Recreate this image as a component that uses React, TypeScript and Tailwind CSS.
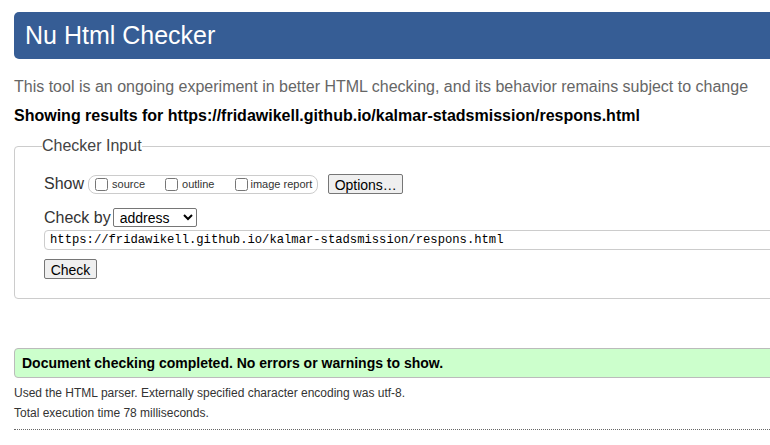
import React from 'react';

const url = 'https://fridawikell.github.io/kalmar-stadsmission/respons.html';

export default function App() {
  return (
    <div className="w-full min-h-[445px] overflow-hidden bg-white font-['Liberation_Sans',Arial,sans-serif] text-[#333]">
      <div className="w-[820px] pl-[14px] pt-[12px]">
        {/* header */}
        <h1 className="flex h-[47px] items-center rounded-l-[5px] bg-[#365d95] pl-[11px] text-[25px] text-white">
          Nu Html Checker
        </h1>

        <p className="mt-[19px] text-[16px] leading-[18px] text-[#666]">
          This tool is an ongoing experiment in better HTML checking, and its behavior remains subject to change
        </p>
        <p className="mt-[11px] text-[16px] font-bold leading-[18px] text-black">
          Showing results for {url}
        </p>

        {/* checker input */}
        <fieldset className="mt-[12px] rounded-l-[4px] border border-[#ccc] px-[27px] pb-[16px]">
          <legend className="text-[16px] leading-[18px] text-[#444]">Checker Input</legend>
          <div className="pl-[2px]">
            <div className="mt-[19px] flex h-[20px] items-center">
              <span className="text-[16px] text-[#333]">Show</span>
              <div className="ml-[4px] flex h-[19px] items-center rounded-[8px] border border-[#ccc] pl-[6px] pr-[5px] text-[11px]">
                <label className="flex items-center">
                  <input type="checkbox" className="m-0 h-[13px] w-[13px]" />
                  <span className="ml-[4px]">source</span>
                </label>
                <label className="ml-[20px] flex items-center">
                  <input type="checkbox" className="m-0 h-[13px] w-[13px]" />
                  <span className="ml-[4px]">outline</span>
                </label>
                <label className="ml-[21px] flex items-center">
                  <input type="checkbox" className="m-0 h-[13px] w-[13px]" />
                  <span className="ml-[2px]">image report</span>
                </label>
              </div>
              <button className="ml-[10px] h-[20px] w-[75px] rounded-[2px] border border-[#767676] bg-[#efefef] text-[14px] text-black">
                Options…
              </button>
            </div>

            <div className="mt-[14px] flex h-[19px] items-center">
              <span className="text-[16px] text-[#333]">Check by</span>
              <select
                defaultValue="address"
                className="ml-[2px] h-[19px] w-[84px] rounded-[2px] border border-[#767676] bg-white pl-[2px] text-[14px] text-black"
              >
                <option value="address">address</option>
                <option value="file">file upload</option>
                <option value="text">text input</option>
              </select>
            </div>

            <input
              readOnly
              value={url}
              className="mt-[3px] block h-[20px] w-full rounded-l-[4px] border border-[#ccc] pl-[5px] font-['Liberation_Mono',Consolas,monospace] text-[12.2px] text-black"
            />

            <button className="mt-[9px] h-[20px] w-[53px] rounded-[2px] border border-[#767676] bg-[#efefef] text-[14px] text-black">
              Check
            </button>
          </div>
        </fieldset>

        {/* result */}
        <div className="mt-[49px] flex h-[30px] items-center rounded-l-[4px] border border-[#bbb] bg-[#ccffcc] pl-[7px] text-[14px] font-bold text-black">
          Document checking completed. No errors or warnings to show.
        </div>
        <p className="mt-[5px] text-[12px] leading-[20px] text-[#333]">
          Used the HTML parser. Externally specified character encoding was utf-8.
        </p>
        <p className="text-[12px] leading-[20px] text-[#333]">Total execution time 78 milliseconds.</p>
        <div className="mt-[6px] border-t border-dotted border-[#666]" />
      </div>
    </div>
  );
}
